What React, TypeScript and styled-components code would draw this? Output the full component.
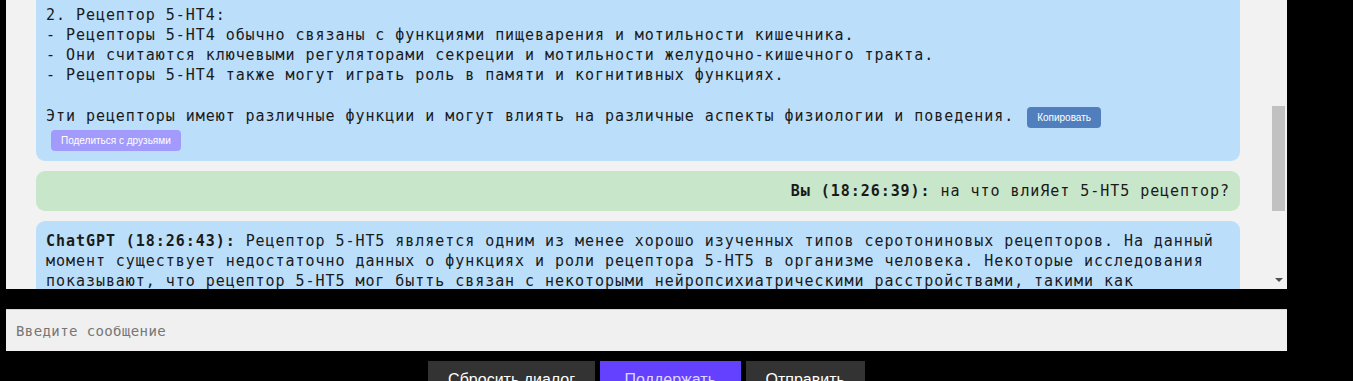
import React, { useLayoutEffect, useRef } from "react";
import styled, { createGlobalStyle } from "styled-components";

const GlobalStyle = createGlobalStyle`
  html, body {
    margin: 0;
    padding: 0;
    background: #000;
    overflow: hidden;
  }
  * { box-sizing: border-box; }
`;

const firstAnswer = `Рецепторы 5-HT3 и 5-HT4 являются подтипами серотониновых рецепторов и выполняют разные функции в организме.

1. Рецептор 5-HT3:
- Рецепторы 5-HT3 являются ионотропными и участвуют в передаче сигналов тошноты и рвоты.
- Они также связаны с регуляцией тревожности и восприятием боли.

`;

const secondPart = `
- Рецепторы 5-HT4 обычно связаны с функциями пищеварения и мотильности кишечника.
- Они считаются ключевыми регуляторами секреции и мотильности желудочно-кишечного тракта.
- Рецепторы 5-HT4 также могут играть роль в памяти и когнитивных функциях.

Эти рецепторы имеют различные функции и могут влиять на различные аспекты физиологии и поведения.`;

const lastAnswer = `Рецептор 5-HT5 является одним из менее хорошо изученных типов серотониновых рецепторов. На данный момент существует недостаточно данных о функциях и роли рецептора 5-HT5 в организме человека. Некоторые исследования показывают, что рецептор 5-HT5 мог бытть связан с некоторыми нейропсихиатрическими расстройствами, такими как шизофрения и депрессия, однако для подтверждения этих данных необходимы дальнейшие исследования.`;

function App() {
  const viewRef = useRef<HTMLDivElement>(null);
  const markRef = useRef<HTMLSpanElement>(null);

  // scroll the chat so the "5-HT4" section sits at the top, as in the shot
  useLayoutEffect(() => {
    const view = viewRef.current;
    const mark = markRef.current;
    if (!view || !mark) return;
    const offset = mark.getBoundingClientRect().top - view.getBoundingClientRect().top;
    view.scrollTop = offset - 6;
  }, []);

  return (
    <>
      <GlobalStyle />
      <Page>
        <ChatFrame>
          <Viewport ref={viewRef}>
            <Bubble $from="bot">
              <b>ChatGPT (18:25:58):</b> {firstAnswer}
              <span ref={markRef}>2. Рецептор 5-HT4:</span>
              {secondPart}{" "}
              <SmallButton $tone="copy">Копировать</SmallButton>{" "}
              <SmallButton $tone="share">Поделиться с друзьями</SmallButton>
            </Bubble>
            <Bubble $from="user">
              <b>Вы (18:26:39):</b> на что влиЯет 5-HT5 рецептор?
            </Bubble>
            <Bubble $from="bot">
              <b>ChatGPT (18:26:43):</b> {lastAnswer}{" "}
              <SmallButton $tone="copy">Копировать</SmallButton>{" "}
              <SmallButton $tone="share">Поделиться с друзьями</SmallButton>
            </Bubble>
          </Viewport>
          <ScrollTrack>
            <ScrollThumb />
            <ScrollArrow />
          </ScrollTrack>
        </ChatFrame>

        <MessageInput placeholder="Введите сообщение" />

        <Actions>
          <ActionButton>Сбросить диалог</ActionButton>
          <ActionButton $accent>Поддержать</ActionButton>
          <ActionButton>Отправить</ActionButton>
        </Actions>
      </Page>
    </>
  );
}

const Page = styled.div`
  width: 1281px;
  margin-left: 6px;
  display: flex;
  flex-direction: column;
`;

const ChatFrame = styled.div`
  height: 289px;
  display: flex;
  background: #f2f2f2;
`;

const Viewport = styled.div`
  flex: 1;
  overflow-y: scroll;
  scrollbar-width: none;
  padding: 0 30px;
  display: flex;
  flex-direction: column;
  gap: 10px;

  &::-webkit-scrollbar {
    display: none;
  }
`;

const Bubble = styled.div<{ $from: "bot" | "user" }>`
  flex-shrink: 0;
  padding: 10px;
  border-radius: 9px;
  background: ${(p) => (p.$from === "user" ? "#c8e6c9" : "#bbdefb")};
  text-align: ${(p) => (p.$from === "user" ? "right" : "left")};
  white-space: pre-wrap;
  font-family: "DejaVu Sans Mono", monospace;
  font-size: 15px;
  line-height: 20px;
  letter-spacing: 0.95px;
  color: #1a1a1a;

  b {
    font-weight: bold;
  }
`;

const SmallButton = styled.button<{ $tone: "copy" | "share" }>`
  display: inline-block;
  vertical-align: middle;
  height: 21px;
  margin: 2px 0 0 ${(p) => (p.$tone === "copy" ? "3px" : "5px")};
  padding: 0 10px;
  border: none;
  border-radius: 4px;
  background: ${(p) => (p.$tone === "copy" ? "#517fbe" : "#a39bfc")};
  color: #fff;
  font-family: "Liberation Sans", Arial, sans-serif;
  font-size: 10px;
  letter-spacing: 0;
  white-space: nowrap;
  cursor: pointer;
`;

const ScrollTrack = styled.div`
  width: 17px;
  flex-shrink: 0;
  background: #f1f1f1;
  display: flex;
  flex-direction: column;
  align-items: center;
`;

const ScrollThumb = styled.div`
  width: 13px;
  height: 105px;
  margin-top: 106px;
  background: #c1c1c1;
`;

const ScrollArrow = styled.div`
  margin-top: auto;
  margin-bottom: 7px;
  width: 0;
  height: 0;
  border-left: 4px solid transparent;
  border-right: 4px solid transparent;
  border-top: 4px solid #505050;
`;

const MessageInput = styled.input`
  margin-top: 20px;
  height: 42px;
  width: 100%;
  padding: 0 10px;
  border: none;
  border-top: 1px solid #d6d6d6;
  background: #f0f0f0;
  font-family: "DejaVu Sans Mono", monospace;
  font-size: 14px;
  letter-spacing: 0.4px;
  color: #222;
  outline: none;

  &::placeholder {
    color: #767676;
  }
`;

const Actions = styled.div`
  margin-top: 10px;
  display: flex;
  justify-content: center;
  gap: 5px;
`;

const ActionButton = styled.button<{ $accent?: boolean }>`
  padding: 10px ${(p) => (p.$accent ? "24.5px" : "20px")};
  border: none;
  background: ${(p) => (p.$accent ? "#6441ff" : "#333333")};
  color: ${(p) => (p.$accent ? "rgba(255,255,255,0.8)" : "#fff")};
  font-family: "Liberation Sans", Arial, sans-serif;
  font-size: 16px;
  cursor: pointer;
`;

export default App;
